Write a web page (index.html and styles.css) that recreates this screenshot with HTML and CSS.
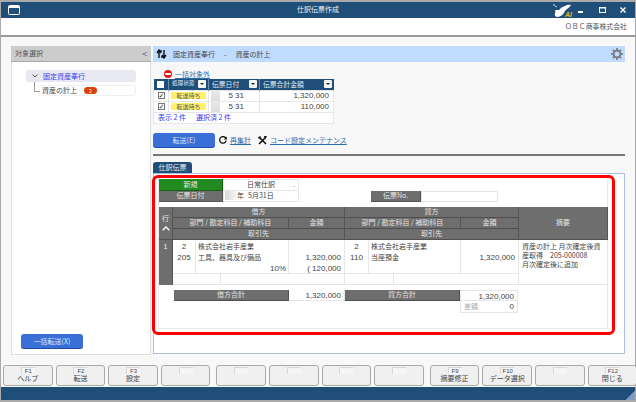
FILE: index.html
```html
<!DOCTYPE html>
<html lang="ja">
<head>
<meta charset="utf-8">
<title>仕訳伝票作成</title>
<link rel="stylesheet" href="styles.css">
</head>
<body>
<div class="window">
  <header class="titlebar">
    <svg class="win-icon" width="12" height="10" viewBox="0 0 12 10"><rect x=".5" y=".5" width="11" height="9" rx="1" fill="none" stroke="#fff"/><rect x="1" y="1" width="10" height="2" fill="#fff"/></svg>
    <div class="title">仕訳伝票作成</div>
    <div class="logo">
      <svg width="18" height="14" viewBox="0 0 18 14"><path d="M2 6 Q4 6 6 6 Q8 3 12 2 Q15 0 18 1 Q17 3 14 5 Q11 7 11 9 Q8 13 4 13 Q1 12 2 9 Q3 8 2 6Z" fill="#fff"/><circle cx="1" cy="1" r=".8" fill="#fff"/><circle cx="3" cy="2.5" r=".7" fill="#fff"/></svg>
      <span class="ai">AI</span>
    </div>
    <svg class="ctl" width="6" height="2" viewBox="0 0 6 2"><rect width="5" height="2" fill="#fff"/></svg>
    <svg class="ctl ctl-max" width="7" height="6" viewBox="0 0 7 6"><rect x=".5" y=".5" width="6" height="5" fill="none" stroke="#fff"/><rect x="0" y="0" width="7" height="1.5" fill="#fff"/></svg>
    <svg class="ctl ctl-close" width="6" height="6" viewBox="0 0 6 6"><path d="M.5.5l5 5M5.5.5l-5 5" stroke="#fff" stroke-width="1.4"/></svg>
  </header>
  <div class="companybar">ＯＢＣ商事株式会社</div>

  <div class="content">
    <aside class="side">
      <div class="side-head"><span>対象選択</span><span class="collapse">&lt;</span></div>
      <div class="side-body">
        <div class="tree-root">
          <svg width="6" height="4" viewBox="0 0 6 4"><path d="M.5.5L3 3 5.5.5" fill="none" stroke="#555"/></svg>
          <span>固定資産奉行</span>
        </div>
        <div class="tree-child"><span>資産の計上</span><span class="badge">2</span></div>
        <div class="side-spacer"></div>
        <button class="btn btn-bulk" type="button">一括転送(X)</button>
      </div>
    </aside>

    <main class="main">
      <div class="main-head">
        <svg class="head-icon" width="11" height="10" viewBox="0 0 11 10"><path d="M3 9V2M1 4l2-3 2 3M8 1v7M6 6l2 3 2-3M3 2h3M5 8h3" fill="none" stroke="#111" stroke-width="1.4"/></svg>
        <span>固定資産奉行</span><span class="dash">-</span><span>資産の計上</span>
        <svg class="gear" width="12" height="12" viewBox="0 0 12 12"><circle cx="6" cy="6" r="3.4" fill="none" stroke="#777" stroke-width="1.8"/><path d="M6 0v2.4M6 9.6V12M0 6h2.4M9.6 6H12M1.8 1.8l1.7 1.7M8.5 8.5l1.7 1.7M10.2 1.8L8.5 3.5M3.5 8.5l-1.7 1.7" stroke="#777" stroke-width="1.6"/></svg>
      </div>

      <div class="exclude">
        <svg width="8" height="8" viewBox="0 0 8 8"><circle cx="4" cy="4" r="4" fill="#e01818"/><rect x="1.2" y="3" width="5.6" height="2" fill="#fff"/></svg>
        <a class="link">一括対象外</a>
      </div>

      <table class="list">
        <colgroup><col class="l1"><col class="l2"><col class="l3"><col class="l4"></colgroup>
        <thead>
          <tr>
            <th><span class="chk chk-head"></span></th>
            <th><div class="th-in th-small"><span>処理状態</span><span class="filter"></span></div></th>
            <th><div class="th-in"><span>伝票日付</span><span class="filter"></span></div></th>
            <th><div class="th-in"><span>伝票合計金額</span><span class="filter"></span></div></th>
          </tr>
        </thead>
        <tbody>
          <tr>
            <td class="ctr"><span class="chk">✓</span></td>
            <td class="ctr"><span class="pill">転送待ち</span></td>
            <td><div class="date"><span class="mask"></span><span class="mon">5</span><span class="day">31</span></div></td>
            <td class="num">1,320,000</td>
          </tr>
          <tr>
            <td class="ctr"><span class="chk">✓</span></td>
            <td class="ctr"><span class="pill">転送待ち</span></td>
            <td><div class="date"><span class="mask"></span><span class="mon">5</span><span class="day">31</span></div></td>
            <td class="num">110,000</td>
          </tr>
          <tr>
            <td colspan="4" class="summary"><span>表示 2 件</span><span>選択済 2 件</span></td>
          </tr>
        </tbody>
      </table>

      <div class="actions">
        <button class="btn btn-send" type="button">転送(E)</button>
        <svg class="act-icon" width="8" height="8" viewBox="0 0 8 8"><path d="M6.8 2.2A3.3 3.3 0 1 0 7.2 4.5" fill="none" stroke="#111" stroke-width="1.3"/><path d="M7.8 .4v3h-3z" fill="#111"/></svg>
        <a class="link">再集計</a>
        <svg class="act-icon act-tool" width="9" height="9" viewBox="0 0 9 9"><path d="M1 1l7 7M8 1L1 8" stroke="#111" stroke-width="1.6"/><path d="M0 2l2-2 1 1-2 2zM6 0h3L7 3z" fill="#111"/></svg>
        <a class="link">コード設定メンテナンス</a>
      </div>

      <div class="rule"></div>
      <div class="tab">仕訳伝票</div>

      <section class="panel">
        <div class="frame">
          <div class="form-row">
            <div class="lbl lbl-green">新規</div>
            <div class="select">日常仕訳<span class="caret">⌄</span></div>
          </div>
          <div class="form-row form-row2">
            <div class="lbl">伝票日付</div>
            <div class="dateval"><span class="mask2"></span><span>年</span><span class="md">5月31日</span></div>
            <div class="lbl lbl-no">伝票No.</div>
            <div class="input"></div>
          </div>

          <div class="voucher">
            <div class="h c-row"><span>行</span><svg width="8" height="5" viewBox="0 0 8 5"><path d="M.7 4.2L4 1l3.3 3.2" fill="none" stroke="#fff" stroke-width="1.3"/></svg></div>
            <div class="h c-dr r1">借方</div>
            <div class="h c-cr r1">貸方</div>
            <div class="h c-memo">摘要</div>
            <div class="h c-dr-a r2">部門 / 勘定科目 / 補助科目</div>
            <div class="h c-dr-b r2">金額</div>
            <div class="h c-cr-a r2">部門 / 勘定科目 / 補助科目</div>
            <div class="h c-cr-b r2">金額</div>
            <div class="h c-dr r3">取引先</div>
            <div class="h c-cr r3">取引先</div>

            <div class="rowno">1</div>
            <div class="d code c-dc"><div>2</div><div>205</div></div>
            <div class="d c-dn"><div>株式会社岩手産業</div><div>工具、器具及び備品</div><div class="rate">10%</div></div>
            <div class="d amt c-da"><div>&nbsp;</div><div>1,320,000</div><div>( 120,000</div></div>
            <div class="d code c-cc"><div>2</div><div>110</div></div>
            <div class="d c-cn"><div>株式会社岩手産業</div><div>当座預金</div></div>
            <div class="d amt c-ca"><div>&nbsp;</div><div>1,320,000</div></div>
            <div class="d c-m">資産の計上 月次確定後資産取得　205-000008<br>月次確定後に追加</div>
            <div class="d e1"></div>
            <div class="d e2"></div>
            <div class="d e3"></div>
            <div class="d e4"></div>
          </div>

          <div class="totals">
            <div class="h t-l1">借方合計</div>
            <div class="d amt1 t-v1">1,320,000</div>
            <div class="h t-l2">貸方合計</div>
            <div class="d amt1 t-v2">1,320,000</div>
            <div class="d amt1 t-diff"><span class="difflbl">差額</span><span>0</span></div>
          </div>
        </div>
        <div class="redbox"></div>
      </section>
    </main>
  </div>

  <nav class="fkeys">
    <div class="group">
      <div class="key"><span class="fn">F1</span><span class="kl">ヘルプ</span></div>
      <div class="key"><span class="fn">F2</span><span class="kl">転送</span></div>
      <div class="key"><span class="fn">F3</span><span class="kl">設定</span></div>
      <div class="key"><span class="fn"></span></div>
    </div>
    <div class="group">
      <div class="key"><span class="fn"></span></div>
      <div class="key"><span class="fn"></span></div>
      <div class="key"><span class="fn"></span></div>
      <div class="key"><span class="fn"></span></div>
    </div>
    <div class="group">
      <div class="key"><span class="fn">F9</span><span class="kl">摘要修正</span></div>
      <div class="key"><span class="fn">F10</span><span class="kl">データ選択</span></div>
      <div class="key"><span class="fn"></span></div>
      <div class="key"><span class="fn">F12</span><span class="kl">閉じる</span></div>
    </div>
  </nav>
  <div class="statusbar"></div>
</div>
</body>
</html>
```
FILE: styles.css
```css
* { box-sizing: border-box; }
html, body { margin: 0; padding: 0; }
body {
  width: 636px; height: 402px; overflow: hidden;
  font-family: "Noto Sans CJK JP", "Liberation Sans", sans-serif;
  font-size: 7px; line-height: 1; color: #444; background: #bbb;
}
.window {
  width: 636px; height: 402px; display: flex; flex-direction: column;
  background: #f8f8f8; border-top: 2px solid #aaa; border-left: 1px solid #aaa; border-right: 1px solid #aaa; border-bottom: 2px solid #aaa;
}
.titlebar {
  height: 16px; flex: none; background: #1f4e79; color: #e8eef5;
  display: flex; align-items: center; padding-left: 7px; position: relative;
}
.title { position: absolute; left: 296px; top: 4px; }
.win-icon { flex: none; }
.logo { margin-left: auto; width: 18px; height: 15px; position: relative; margin-right: 6px; }
.logo svg { display: block; margin-top: 1px; }
.ai {
  position: absolute; right: -1px; bottom: 0; color: #e5b62b;
  font: italic bold 7px "Liberation Sans", sans-serif;
}
.ctl { flex: none; margin-left: 1px; margin-right: 14px; margin-top: 3px; }
.ctl-max { margin-top: 0; margin-right: 13px; }
.ctl-close { margin-top: 0; margin-right: 9px; }

.companybar {
  height: 19px; flex: none; background: #fff; border-bottom: 2px solid #999;
  text-align: right; padding: 5px 8px 0 0; font-size: 6.9px; color: #555;
}
.content { flex: 1; display: flex; padding: 9px 10px 0 10px; gap: 2px; min-height: 0; }

.side { width: 140px; height: 309px; flex: none; display: flex; flex-direction: column; border: 1px solid #ddd; background: #fff; }
.side-head {
  height: 16px; flex: none; background: #ccc; display: flex; justify-content: space-between;
  align-items: center; padding: 0 4px; color: #555; border-bottom: 1px solid #aaa; margin: -1px -1px 0;
}
.collapse { font-size: 9px; color: #666; }
.side-body { flex: 1; display: flex; flex-direction: column; position: relative; padding-top: 8px; }
.tree-root {
  margin-left: 14px; width: 110px; height: 12px; border-radius: 3px; background: #e8e8f2; color: #3a3af0;
  display: flex; align-items: center; gap: 5px; padding-left: 6px; flex: none;
}
.tree-child {
  margin: 3px 0 0 26px; width: 98px; height: 11px; border: 1px solid #f0f0f0; border-radius: 3px;
  display: flex; align-items: center; gap: 7px; padding-left: 3px; position: relative; flex: none;
}
.tree-child::before {
  content: ""; position: absolute; left: -5px; top: -4px; width: 5px; height: 9px;
  border-left: 1px solid #999; border-bottom: 1px solid #999;
}
.badge {
  width: 13px; height: 7px; border-radius: 4px; background: #e0400c; color: #fff;
  font-size: 5px; display: flex; align-items: center; justify-content: center;
}
.side-spacer { flex: 1; }
.btn {
  border: 0; border-bottom: 1px solid #1f4aa8; border-radius: 3px; background: #3a6fd8; color: #d9e4f7;
  font: 7px "Noto Sans CJK JP", sans-serif; padding: 0; display: block;
}
.btn-bulk { width: 62px; height: 15px; margin: 0 0 5px 9px; flex: none; }

.main { width: 472px; height: 308px; flex: none; display: flex; flex-direction: column; }
.main-head {
  height: 16px; flex: none; background: #bfdbff; display: flex; align-items: center; padding-left: 3px; color: #444;
}
.head-icon { margin-right: 6px; }
.dash { margin: 0 9px; }
.gear { margin-left: auto; margin-right: 2px; }
.exclude { height: 17px; flex: none; display: flex; align-items: flex-end; padding: 0 0 1px 11px; gap: 3px; }
.link { color: #2f6fb0; text-decoration: underline; }

.list { width: 180px; border-collapse: collapse; table-layout: fixed; background: #fff; flex: none; }
.l1 { width: 15px; } .l2 { width: 40px; } .l3 { width: 51px; } .l4 { width: 74px; }
.list th { height: 11px; background: #1f4e79; color: #dfe8f2; font-weight: normal; padding: 0; border-right: 1px solid #6f8eab; }
.list th:last-child { border-right: 0; }
.list td { height: 11px; padding: 0; border: 1px solid #e6e6e6; }
.th-in { display: flex; align-items: center; justify-content: space-between; padding: 0 2px 0 3px; white-space: nowrap; font-size: 6.8px; }
.th-small { font-size: 5.6px; }
.filter { width: 8px; height: 8px; background: #f4f4f4; border-radius: 1px; position: relative; flex: none; }
.filter::after {
  content: ""; position: absolute; left: 2px; top: 3px; border: 2px solid transparent; border-top: 2px solid #222; border-bottom: 0;
}
.chk {
  display: inline-block; width: 7px; height: 7px; border: 1px solid #777; background: #fff; color: #222;
  font: bold 7px/6px "DejaVu Sans", sans-serif; text-align: center; vertical-align: middle;
}
.chk-head { border-color: #fff; width: 7px; height: 7px; }
.ctr { text-align: center; }
th:first-child { text-align: center; }
.pill { display: inline-block; width: 35px; height: 7px; line-height: 7px; background: #fff06a; border-radius: 1px; color: #555; font-size: 6px; text-align: center; vertical-align: middle; }
.date { display: flex; align-items: center; height: 10px; font: 8px "Liberation Sans", sans-serif; color: #444; }
.mask { width: 9px; height: 11px; margin-left: 2px; background: linear-gradient(#e9e9e9, #dcdcdc); flex: none; }
.mon { width: 13px; text-align: right; }
.day { margin-left: 2px; }
.num { text-align: right; padding-right: 4px !important; font: 8px "Liberation Sans", sans-serif; color: #444; }
.summary { color: #3a3af0; padding-left: 4px !important; }
.summary span { margin-right: 10px; }

.actions { flex: none; height: 15px; margin-top: 9px; display: flex; align-items: center; }
.btn-send { width: 62px; height: 15px; }
.act-icon { margin-left: 4px; margin-right: 3px; }
.act-tool { margin-left: 7px; margin-right: 3px; }
.rule { height: 2px; flex: none; margin-top: 6px; background: #777; }
.tab {
  width: 39px; height: 11px; flex: none; margin-top: 6px; background: #1f4e79; color: #e8eef5;
  border-radius: 3px 3px 0 0; display: flex; align-items: center; justify-content: center;
}
.panel {
  flex: 1; position: relative; background: #fff; border: 1px solid #a9c1da;
  padding: 5px 16px 26px 4px; min-height: 0;
}
.frame {
  height: 150px; border: 1px solid #e8e8e8; border-top: 0; padding: 0;
}
.form-row { display: flex; height: 12px; }
.form-row2 { height: 11px; }
.lbl {
  width: 64px; flex: none; background: #6e6e6e; color: #e8e8e8; display: flex; align-items: center;
  justify-content: center; border-bottom: 1px solid #555; border-right: 1px solid #555;
}
.lbl-green { background: #218a21; border-color: #156015; }
.select {
  width: 76px; border: 1px solid #e8e8e8; display: flex; align-items: center; justify-content: center; position: relative; color: #444;
}
.caret { position: absolute; right: 2px; top: 2px; font-size: 5px; color: #999; }
.dateval { width: 76px; border: 1px solid #e8e8e8; border-top: 0; display: flex; align-items: center; color: #444; }
.mask2 { width: 11px; height: 9px; background: linear-gradient(90deg, #d8d8d8, #f4f4f4); margin-left: 1px; margin-right: 1px; }
.md { margin-left: 4px; }
.lbl-no { margin-left: 72px; width: 50px; }
.input { width: 77px; border: 1px solid #e4e4e4; }

.voucher {
  display: grid; margin-top: 5px;
  grid-template-columns: 14px 23px 25px 68px 56px 24px 25px 67px 58px 89px;
  grid-template-rows: 11px 11px 11px 34px 11px;
}
.h {
  background: #6e6e6e; color: #e4e4e4; display: flex; align-items: center; justify-content: center;
  border-right: 1px solid #555; border-bottom: 1px solid #4f4f4f; white-space: nowrap;
}
.c-row { grid-column: 1; grid-row: 1 / 4; flex-direction: column; gap: 4px; color: #eee; }
.r1 { grid-row: 1; } .r2 { grid-row: 2; } .r3 { grid-row: 3; }
.c-dr { grid-column: 2 / 6; } .c-cr { grid-column: 6 / 10; }
.c-memo { grid-column: 10; grid-row: 1 / 4; }
.c-dr-a { grid-column: 2 / 5; } .c-dr-b { grid-column: 5; }
.c-cr-a { grid-column: 6 / 9; } .c-cr-b { grid-column: 9; }
.rowno {
  grid-column: 1; grid-row: 4 / 6; background: #6e6e6e; color: #eee; text-align: center; padding-top: 3px;
  font: 7px "Liberation Sans", sans-serif; border-right: 1px solid #555;
}
.d { border-right: 1px solid #e6e6e6; border-bottom: 1px solid #e6e6e6; background: #fff; color: #444; padding: 1px 2px; line-height: 11px; }
.code { font: 8px/11px "Liberation Sans", sans-serif; text-align: center; }
.c-dc { grid-column: 2; grid-row: 4; } .c-dn { grid-column: 3 / 5; grid-row: 4; }
.c-da { grid-column: 5; grid-row: 4; }
.c-cc { grid-column: 6; grid-row: 4; } .c-cn { grid-column: 7 / 9; grid-row: 4; }
.c-ca { grid-column: 9; grid-row: 4; }
.c-m { grid-column: 10; grid-row: 4 / 6; line-height: 9px; padding: 2px 3px; }
.rate { text-align: right; font: 8px/11px "Liberation Sans", sans-serif; }
.amt { text-align: right; font: 8px/11px "Liberation Sans", sans-serif; padding-right: 3px; }
.e1 { grid-column: 2 / 4; grid-row: 5; } .e2 { grid-column: 4 / 6; grid-row: 5; }
.e3 { grid-column: 6 / 8; grid-row: 5; } .e4 { grid-column: 8 / 10; grid-row: 5; }

.totals {
  display: grid; margin-top: 5px; grid-template-columns: 15px 115px 56px 115px 58px;
  grid-template-rows: 11px 12px;
}
.t-l1 { grid-column: 2; grid-row: 1; } .t-v1 { grid-column: 3; grid-row: 1; }
.t-l2 { grid-column: 4; grid-row: 1; } .t-v2 { grid-column: 5; grid-row: 1; border: 1px solid #e6e6e6; }
.t-diff { grid-column: 5; grid-row: 2; display: flex; justify-content: space-between; border: 1px solid #e6e6e6; border-top: 0; }
.amt1 { text-align: right; font: 8px/9px "Liberation Sans", sans-serif; padding: 1px 3px 0 0; }
.difflbl { color: #aaa; font: 7px/9px "Noto Sans CJK JP", sans-serif; padding-left: 3px; }

.redbox {
  position: absolute; left: -2px; top: 1px; width: 463px; height: 160px;
  border: 3px solid #f00; border-radius: 6px; pointer-events: none;
}

.fkeys { flex: none; height: 22px; padding: 0 0 1px 2px; display: flex; gap: 6px; }
.group { display: flex; gap: 3px; }
.key {
  width: 49.6px; height: 21px; border: 1px solid #aaa; border-radius: 3px; background: #f0f0f0; color: #444;
  display: flex; flex-direction: column; align-items: center;
}
.fn {
  width: 14px; height: 7px; font: 6px/7px "Liberation Sans", sans-serif; text-align: center;
  background: #f5f5f5; border-top: 1px solid #d8d8d8; border-left: 1px solid #d8d8d8; margin: 1px 0; flex: none;
}
.kl { font-size: 7px; }
.statusbar { flex: none; height: 13px; background: linear-gradient(135deg, #1f4e79 calc(100% - 7px), #7f9dbb calc(100% - 7px)); }
```
